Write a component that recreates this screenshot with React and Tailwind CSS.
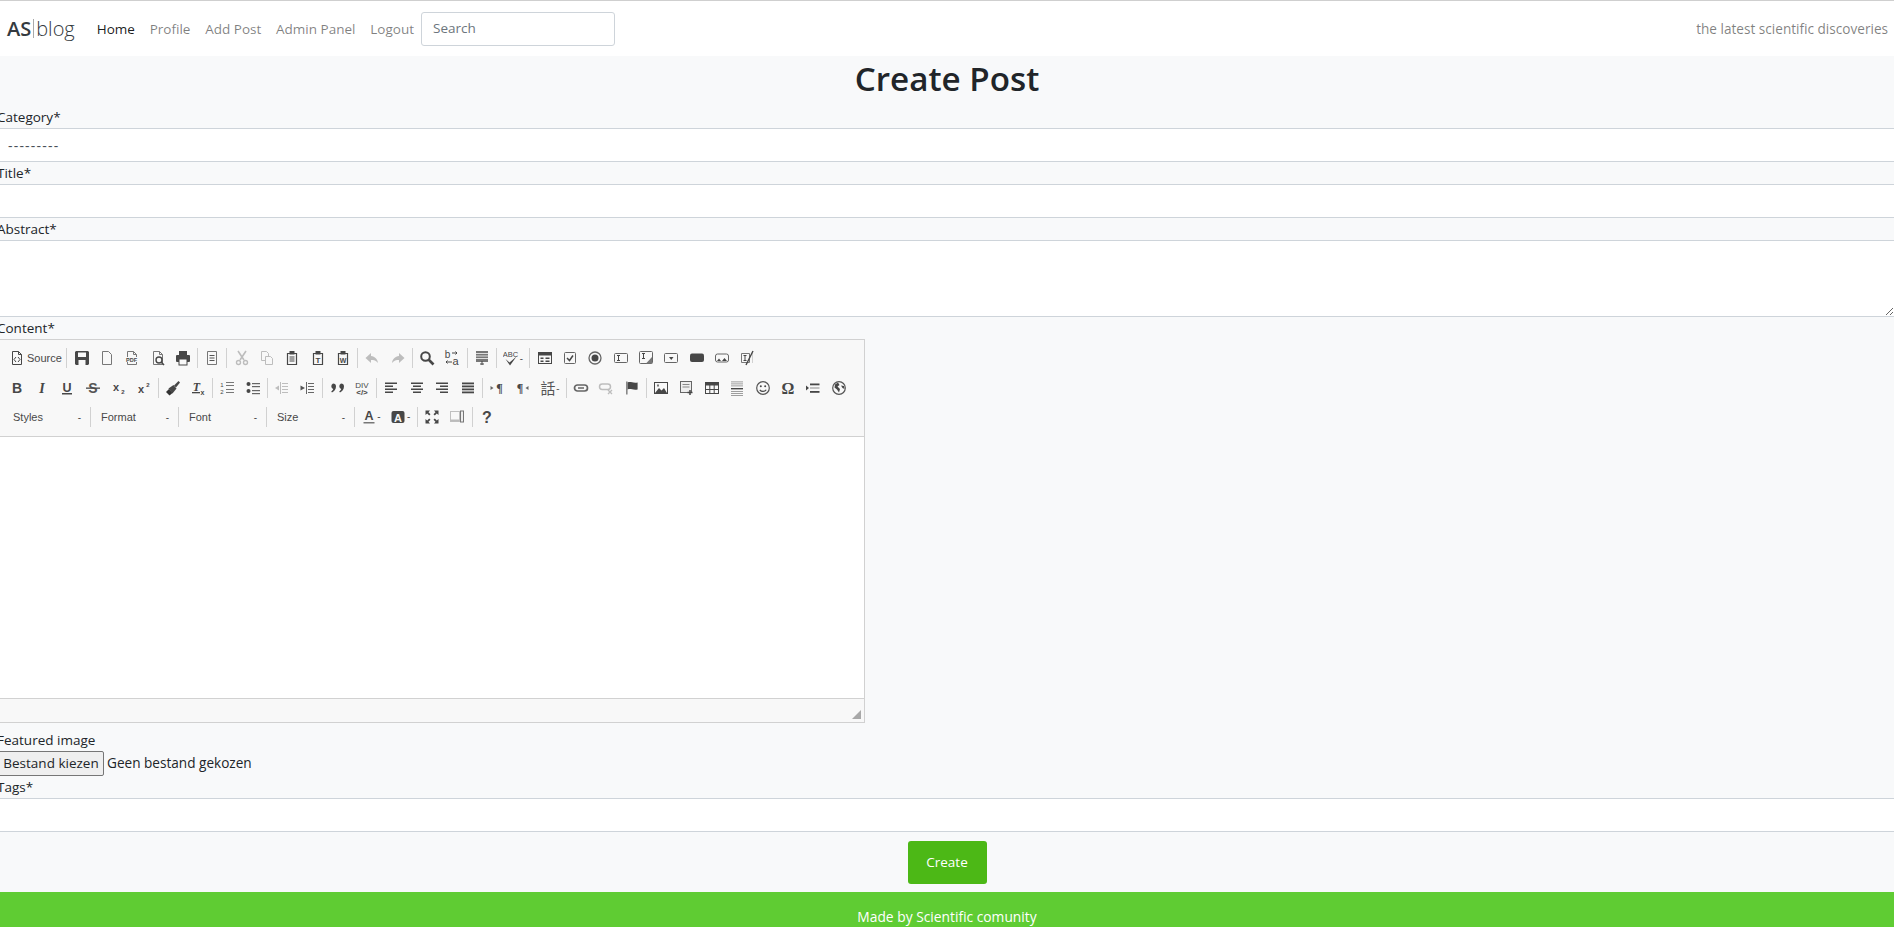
import React from 'react';

const ui = '"Open Sans", "Noto Sans", sans-serif';
const dark = '#474747';
const off = '#bdbdbd';

// CKEditor style icons, all drawn on a 16x16 box
const Page = ({ c = dark }) => <path d="M3.5 1.5h6l3 3v10h-9z M9.5 1.5v3h3" fill="none" stroke={c} />;
const Lines = ({ y = [4, 7, 10, 13], x = 1, w = 14, c = dark, h = 1.5 }) => y.map((v) => <rect key={v} x={x} y={v} width={w} height={h} fill={c} />);
const Clip = ({ children }) => (
    <>
        <path d="M3.5 3.5h9v11h-9z" fill="none" stroke={dark} strokeWidth="1.2" />
        <rect x="5.5" y="1" width="5" height="3.5" fill={dark} />
        {children}
    </>
);
const T = ({ x = 8, y = 12, s = 12, w = 700, st = 'normal', c = dark, f = '"Liberation Sans", sans-serif', children }) => (
    <text x={x} y={y} fontSize={s} fontWeight={w} fontStyle={st} fill={c} fontFamily={f} textAnchor="middle">{children}</text>
);

const icons = {
    source: <><Page /><path d="M7 7L5 9.5 7 12M9 7l2 2.5L9 12" fill="none" stroke={dark} /></>,
    save: <path fillRule="evenodd" d="M2 1h12l1 1v12l-1 1H2l-1-1V2zM4 2.5v4.5h8V2.5zM4.5 10v5h7v-5z" fill={dark} />,
    newpage: <path d="M3.5 1.5h6l3 3v10h-9z" fill="none" stroke="#777" />,
    pdf: <><Page c="#777" /><rect x="1" y="7" width="13" height="5" fill="#f8f8f8" /><T x="7.5" y="11.5" s="5.5">PDF</T></>,
    preview: <><Page c="#777" /><circle cx="9" cy="10" r="3" fill="#f8f8f8" stroke={dark} strokeWidth="1.4" /><path d="M11 12l3 3" stroke={dark} strokeWidth="1.6" /></>,
    print: <><rect x="4" y="1" width="8" height="4" fill={dark} /><rect x="1" y="5" width="14" height="7" rx="1" fill={dark} /><rect x="4" y="9" width="8" height="6" fill="#f8f8f8" stroke={dark} /></>,
    templates: <><path d="M3.5 1.5h9v13h-9z" fill="none" stroke="#777" /><Lines y={[5, 7.5, 10]} x={5.5} w={5} h={1} c="#555" /></>,
    cut: <><path d="M4 1l6 9M12 1L6 10" stroke={off} strokeWidth="1.6" fill="none" /><circle cx="4.5" cy="12.5" r="2" fill="none" stroke={off} strokeWidth="1.4" /><circle cx="11.5" cy="12.5" r="2" fill="none" stroke={off} strokeWidth="1.4" /></>,
    copy: <><path d="M2.5 1.5h5l2 2v7h-7z" fill="none" stroke={off} /><path d="M6.5 6.5h5l2 2v6h-7z" fill="#f8f8f8" stroke={off} /></>,
    paste: <Clip><Lines y={[6.5, 8.5, 10.5]} x={5.5} w={5} h={1} /></Clip>,
    pastetext: <Clip><T y="13" s="8">T</T></Clip>,
    pasteword: <Clip><T y="13" s="7">W</T></Clip>,
    undo: <path d="M7 3L1.5 8 7 13v-3c3 0 5 .5 7 3-.5-4-3-6.5-7-7z" fill={off} />,
    redo: <path d="M9 3l5.5 5L9 13v-3c-3 0-5 .5-7 3 .5-4 3-6.5 7-7z" fill={off} />,
    find: <><circle cx="6.5" cy="6.5" r="4.3" fill="none" stroke={dark} strokeWidth="2" /><path d="M9.5 9.5l5 5" stroke={dark} strokeWidth="2.6" /></>,
    replace: <><T x="3.5" y="8" s="10" w="400">b</T><T x="11.5" y="15" s="11" w="400">a</T><path d="M8 3h5l-1.500-1.500M13 3l-1.500 1.500M8 12H2l1.500-1.500M2 12l1.500 1.500" fill="none" stroke={dark} /></>,
    selectall: <><rect x="2" y="1" width="12" height="11" fill="#777" /><Lines y={[3, 5.5, 8]} x={2} w={12} h={1} c="#ddd" /><path d="M6 14h4M8 11v4" stroke={dark} /></>,
    spell: <><T x="7.5" y="7" s="7.5" w="400">ABC</T><path d="M2.500 9l4 3.500 7-6-6.500 9z" fill={dark} /></>,
    form: <><rect x="1.5" y="2.5" width="13" height="11" fill="none" stroke={dark} /><rect x="1.5" y="2.5" width="13" height="3" fill={dark} /><Lines y={[7.5, 10.5]} x={3.5} w={3} h={1.5} /><Lines y={[7.5, 10.5]} x={8.5} w={4} h={1.5} /></>,
    checkbox: <><rect x="2.5" y="2.5" width="11" height="11" rx="1" fill="none" stroke="#666" /><path d="M5 8l2.500 2.500L11 5.500" fill="none" stroke={dark} strokeWidth="1.500" /></>,
    radio: <><circle cx="8" cy="8" r="6" fill="none" stroke="#666" strokeWidth="1.3" /><circle cx="8" cy="8" r="3.5" fill={dark} /></>,
    textfield: <><rect x="1.5" y="3.5" width="13" height="9" rx="1" fill="none" stroke="#666" /><path d="M4 5.500h3M4 10.500h3M5.500 5.500v5" stroke={dark} /></>,
    textarea: <><rect x="1.5" y="1.5" width="13" height="12" rx="1" fill="none" stroke="#666" /><path d="M4 3.500h3M4 8.500h3M5.500 3.500v5" stroke={dark} /><path d="M14 7v6.500H8z" fill="#777" /></>,
    select: <><rect x="1.5" y="3.5" width="13" height="9" rx="1" fill="none" stroke="#666" /><path d="M6 7h4.500l-2.250 3z" fill={dark} /></>,
    button: <rect x="1" y="3.5" width="14" height="8.5" rx="2" fill={dark} />,
    imagebutton: <><rect x="1.5" y="4" width="13" height="8" rx="2" fill="none" stroke="#666" /><path d="M3 11l2-2.500L7 11zM8 11l2.500-3 2.500 3z" fill={dark} /></>,
    hidden: <><path d="M2.500 3.500h8v9h-8z" fill="none" stroke="#777" /><path d="M13.500 3.500v9" stroke="#aaa" strokeDasharray="1 1" /><path d="M4.500 5.500h3M4.500 10.500h3M6 5.500v5" stroke={dark} /><path d="M14 1L7 15" stroke={dark} strokeWidth="1.4" /></>,
    bold: <T y="13" s="14">B</T>,
    italic: <T y="13" s="14" st="italic" f='"Liberation Serif", serif'>I</T>,
    underline: <><T y="11.5" s="12.5">U</T><rect x="3" y="13" width="10" height="1.5" fill={dark} /></>,
    strike: <><T y="13" s="14" c="#555">S</T><rect x="1" y="7.5" width="14" height="1.3" fill={dark} /></>,
    sub: <><T x="6" y="11" s="11">x</T><T x="13" y="14" s="6">2</T></>,
    sup: <><T x="6" y="13" s="11">x</T><T x="13" y="6.5" s="6">2</T></>,
    brush: <><path d="M8.500 5l-5 3.500 4 5 4-5z" fill={dark} /><path d="M9 5.500L13.500 1l1.500 1.500L11 7.500z" fill={dark} /><path d="M1 12l3-3 3.500 4-3 2.500z" fill="#333" /></>,
    removeformat: <><T x="6.5" y="11" s="12" st="italic" f='"Liberation Serif", serif'>T</T><rect x="2" y="12" width="8" height="1.3" fill={dark} /><T x="12.5" y="15" s="7">x</T></>,
    ol: <><T x="3" y="7" s="6" w="400">1</T><T x="3" y="14" s="6" w="400">2</T><Lines y={[2, 5, 9, 12]} x={7} w={8} h={1} c="#777" /></>,
    ul: <><circle cx="3.5" cy="4" r="2" fill={dark} /><circle cx="3.5" cy="11" r="2" fill={dark} /><Lines y={[3, 6, 10, 13]} x={7} w={8} h={1.2} c="#666" /></>,
    outdent: <><Lines y={[3, 6, 9, 12]} x={8} w={6} h={1} c={off} /><path d="M6.500 2v12" stroke={off} /><path d="M1 8l4-2.500v5z" fill={off} /></>,
    indent: <><Lines y={[3, 6, 9, 12]} x={9} w={6} h={1} c="#666" /><path d="M7.500 2v12" stroke="#666" /><path d="M6 8L1.500 5.500v5z" fill="#555" /></>,
    quote: <path d="M4 3.500a3 3 0 0 1 3 3c0 3-2 5-4 6l-.8-1c1-.7 1.800-1.700 2-2.500A3 3 0 0 1 4 3.500zM12 3.500a3 3 0 0 1 3 3c0 3-2 5-4 6l-.8-1c1-.7 1.800-1.700 2-2.500a3 3 0 0 1-.2-5.500z" fill={dark} />,
    div: <><T y="7.5" s="8" w="400">DIV</T><T y="15" s="8">{'</>'}</T></>,
    left: <><Lines y={[2.5, 8.5]} x={2} w={12} h={1.5} /><Lines y={[5.5, 11.5]} x={2} w={8} h={1.5} /></>,
    center: <><Lines y={[2.5, 8.5]} x={2} w={12} h={1.5} /><Lines y={[5.5, 11.5]} x={4} w={8} h={1.5} /></>,
    right: <><Lines y={[2.5, 8.5]} x={2} w={12} h={1.5} /><Lines y={[5.5, 11.5]} x={6} w={8} h={1.5} /></>,
    justify: <Lines y={[2.5, 5.5, 8.5, 11.5]} x={2} w={12} h={1.8} />,
    ltr: <><path d="M1.500 6l3 2-3 2z" fill="#666" /><T x="10.5" y="12" s="12" f='"Liberation Serif", serif'>¶</T></>,
    rtl: <><T x="6" y="12" s="12" f='"Liberation Serif", serif'>¶</T><path d="M14.500 6l-3 2 3 2z" fill="#666" /></>,
    language: <T x="8" y="13.5" s="15" w="400" c="#555" f='"Noto Sans CJK TC", sans-serif'>話</T>,
    link: <><rect x="1.5" y="5" width="13" height="6" rx="3" fill="none" stroke="#666" strokeWidth="1.7" /><path d="M5 8h6" stroke="#666" strokeWidth="1.5" /></>,
    unlink: <><rect x="1.5" y="4" width="11" height="5.5" rx="2.7" fill="none" stroke={off} strokeWidth="1.5" /><path d="M10 10l4 4M14 10l-4 4" stroke={off} strokeWidth="1.3" /></>,
    anchor: <><rect x="2" y="1.5" width="1.6" height="13" fill="#888" /><path d="M3.600 2.500c3-1.500 5 1 10 0v7c-5 1-7-1.500-10 0z" fill={dark} /></>,
    image: <><rect x="1.5" y="2.5" width="13" height="11" fill="none" stroke={dark} /><path d="M2 13l4-5 2.500 2.500L11 8l3 5z" fill={dark} /><rect x="4" y="4.5" width="2" height="2" fill="#777" /></>,
    flash: <><rect x="2.5" y="1.5" width="11" height="11" fill="#eee" stroke="#666" /><Lines y={[4, 6.5]} x={4.5} w={7} h={1} c="#888" /><path d="M12 10v5M9.500 12.500h5" stroke={dark} strokeWidth="1.5" /></>,
    table: <><rect x="1.5" y="2.5" width="13" height="11" fill="none" stroke={dark} /><rect x="1.5" y="2.5" width="13" height="3" fill={dark} /><path d="M1.500 9.500h13M5.800 5v8.500M10.200 5v8.500" stroke={dark} /></>,
    hr: <><Lines y={[1.5, 3.5, 5.5, 11, 13, 15]} x={2} w={12} h={0.8} c="#888" /><rect x="2" y="8" width="12" height="1.4" fill={dark} /></>,
    smiley: <><circle cx="8" cy="8" r="6.3" fill="none" stroke="#555" strokeWidth="1.2" /><circle cx="5.8" cy="6.3" r="1" fill={dark} /><circle cx="10.2" cy="6.3" r="1" fill={dark} /><path d="M4.800 9.800c1.500 2.200 5 2.200 6.400 0" fill="none" stroke={dark} strokeWidth="1.2" /></>,
    omega: <T y="14" s="16" f='"Liberation Serif", serif'>Ω</T>,
    pagebreak: <><path d="M1 5.500l3 2.500-3 2.500z" fill={dark} /><Lines y={[3.5, 11]} x={5} w={9.5} h={1.8} /><rect x="5" y="7.5" width="9.5" height="1" fill="#888" /></>,
    iframe: <><circle cx="8" cy="8" r="6.3" fill="#f8f8f8" stroke="#555" strokeWidth="1.2" /><path d="M4 4.500l3-2 1.500 2.500-2 1.500 2.500 2.500-1 3.500-2-3-2.500-2zM10 5.500l3 .5.500 3-2-1z" fill={dark} /></>,
    maximize: <path d="M1.500 1.500h4.500L4.500 3.200l2 2-1.300 1.300-2-2L1.500 6zM14.500 1.500H10l1.500 1.700-2 2 1.300 1.300 2-2L14.500 6zM1.500 14.500H6l-1.500-1.700 2-2-1.300-1.300-2 2L1.500 10zM14.500 14.500H10l1.500-1.700-2-2 1.300-1.300 2 2 1.700-1.500z" fill={dark} />,
    showblocks: <><path d="M1.500 2.500h9v10h-9z" fill="none" stroke="#888" strokeDasharray="1 1" /><rect x="1.5" y="10.5" width="9" height="2" fill="#bbb" /><rect x="11.5" y="2" width="3" height="11" fill="#eee" stroke="#777" /></>,
    about: <T y="14" s="16">?</T>,
    textcolor: <><T y="11" s="12.5">A</T><rect x="2.5" y="13" width="11" height="1.5" fill="#777" /></>,
    bgcolor: <><rect x="1.5" y="2" width="13" height="12" rx="2" fill={dark} /><T y="12.5" s="11" c="#f8f8f8">A</T></>,
};

const Icon = ({ name }) => (
    <svg width="16" height="16" viewBox="0 0 16 16" className="block shrink-0">{icons[name]}</svg>
);

const Btn = ({ name }) => (
    <span className="flex h-[24px] w-[25.35px] items-center justify-center"><Icon name={name} /></span>
);
const Sep = () => <span className="mx-[1.5px] h-[20px] w-px bg-[#d1d1d1]" />;
const Caret = () => <span className="mr-[5px] -ml-[4px] text-[10px] leading-none text-[#474747]">-</span>;

const row1 = ['|', 'save', 'newpage', 'pdf', 'preview', 'print', '|', 'templates', '|', 'cut', 'copy', 'paste', 'pastetext', 'pasteword', '|', 'undo', 'redo', '|', 'find', 'replace', '|', 'selectall', '|', 'spell', 'v', '|', 'form', 'checkbox', 'radio', 'textfield', 'textarea', 'select', 'button', 'imagebutton', 'hidden'];
const row2 = ['bold', 'italic', 'underline', 'strike', 'sub', 'sup', '|', 'brush', 'removeformat', '|', 'ol', 'ul', '|', 'outdent', 'indent', '|', 'quote', 'div', '|', 'left', 'center', 'right', 'justify', '|', 'ltr', 'rtl', 'language', 'v', '|', 'link', 'unlink', 'anchor', '|', 'image', 'flash', 'table', 'hr', 'smiley', 'omega', 'pagebreak', 'iframe'];
const row3 = ['textcolor', 'v', 'bgcolor', 'v', '|', 'maximize', 'showblocks', '|', 'about'];

const renderRow = (items) => items.map((item, i) => {
    if (item === '|') return <Sep key={i} />;
    if (item === 'v') return <Caret key={i} />;
    return <Btn key={i} name={item} />;
});

const Combo = ({ label }) => (
    <>
        <span className="flex h-[24px] w-[84px] items-center justify-between pl-[9px] pr-[7px] text-[11px] text-[#484848]">
            <span>{label}</span>
            <span className="text-[10px]">-</span>
        </span>
        <Sep />
    </>
);

const Label = ({ children, className = '' }) => (
    <label className={`-ml-[3px] block text-[13.5px] leading-[22px] text-[#212529] ${className}`}>{children}</label>
);

const fieldClass = 'block w-full border-y border-[#ced4da] bg-white outline-none';

const App = () => {
    return (
        <div className="h-[927px] overflow-hidden bg-[#f8f9fa]" style={{ fontFamily: ui }}>
            {/* Navbar */}
            <nav className="flex h-[56px] items-center justify-between border-t border-[#cfcfcf] bg-white pr-[6px] pl-[7px]">
                <div className="flex items-center">
                    <a className="flex items-center text-[20px] leading-none text-[#343a40]">
                        <span className="font-semibold">AS</span>
                        <span className="mx-[2px] h-[19px] w-px bg-[#aaa]" />
                        <span className="font-light">blog</span>
                    </a>
                    <ul className="mt-[1px] ml-[22px] flex items-center gap-[14.8px] text-[13.5px] text-[#00000080]">
                        <li className="text-[#000000e6]">Home</li>
                        <li>Profile</li>
                        <li>Add Post</li>
                        <li>Admin Panel</li>
                        <li>Logout</li>
                    </ul>
                    <input placeholder="Search" className="ml-[7px] h-[34px] w-[194px] rounded-[3px] border border-[#ced4da] pr-[11px] pb-[2px] pl-[11px] text-[13.5px] outline-none placeholder:text-[#6c757d]" />
                </div>
                <span className="mt-[1px] text-[13.6px] text-[#00000080]">the latest scientific discoveries</span>
            </nav>

            <h1 className="mt-[1px] text-center text-[33.2px] font-semibold leading-[44px] text-[#212529]">Create Post</h1>

            <form>
                <Label className="pt-[5px]">Category*</Label>
                <select className={`${fieldClass} h-[34px] appearance-none pl-[8px] text-[14px] tracking-[1.2px] text-[#495057]`}>
                    <option>---------</option>
                </select>
                <Label>Title*</Label>
                <input className={`${fieldClass} h-[34px]`} />
                <Label>Abstract*</Label>
                <textarea className={`${fieldClass} h-[77px]`} />
                <Label>Content*</Label>

                {/* Rich text editor */}
                <div className="w-[865px] border border-l-0 border-[#d1d1d1] bg-[#f8f8f8]">
                    <div className="h-[97px] border-b border-[#d1d1d1] pt-[6px]">
                        <div className="flex h-[24px] items-center pl-[9px]">
                            <Icon name="source" />
                            <span className="mr-[3px] ml-[2px] text-[11px] text-[#484848]" style={{ fontFamily: '"Liberation Sans", sans-serif' }}>Source</span>
                            {renderRow(row1)}
                        </div>
                        <div className="mt-[6px] flex h-[24px] items-center pl-[4px]">{renderRow(row2)}</div>
                        <div className="mt-[5px] flex h-[24px] items-center pl-[4px]" style={{ fontFamily: '"Liberation Sans", sans-serif' }}>
                            <Combo label="Styles" />
                            <Combo label="Format" />
                            <Combo label="Font" />
                            <Combo label="Size" />
                            {renderRow(row3)}
                        </div>
                    </div>
                    <div className="h-[261px] bg-white" />
                    <div className="flex h-[24px] items-end justify-end border-t border-[#d1d1d1] p-[3px]">
                        <svg width="9" height="9" viewBox="0 0 9 9"><path d="M9 0v9H0z" fill="#a8a8a8" /></svg>
                    </div>
                </div>

                <Label className="mt-[6px]">Featured image</Label>
                <div className="flex items-center text-[13.6px] text-[#212529]">
                    <button type="button" className="-ml-[2px] h-[25px] w-[106px] rounded-[2px] border border-[#767676] bg-[#efefef] text-[13.5px]">Bestand kiezen</button>
                    <span className="ml-[3px]">Geen bestand gekozen</span>
                </div>
                <Label>Tags*</Label>
                <input className={`${fieldClass} h-[34px]`} />

                <div className="flex justify-center pt-[9px]">
                    <button type="button" className="h-[43px] w-[79px] rounded-[3px] bg-[#4cb816] text-[13.5px] text-white">Create</button>
                </div>
            </form>

            <footer className="mt-[8px] h-[35px] bg-[#5fcc33] pt-[15px] text-center text-[13.8px] leading-[20px] text-white">Made by Scientific comunity</footer>
        </div>
    );
};

export default App;
